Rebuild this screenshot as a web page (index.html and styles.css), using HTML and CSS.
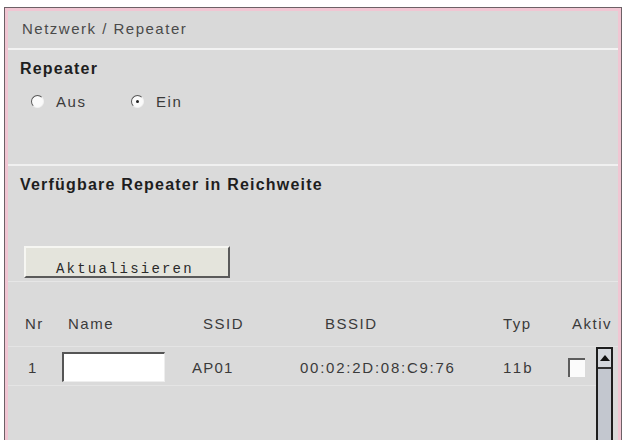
FILE: index.html
```html
<!DOCTYPE html>
<html lang="de">
<head>
<meta charset="utf-8">
<title>Netzwerk / Repeater</title>
<link rel="stylesheet" href="styles.css">
</head>
<body>
<div class="panel">
  <div class="frame">
    <div class="titlebar">Netzwerk / Repeater</div>
    <div class="section s1">
      <div class="heading">Repeater</div>
      <div class="radios">
        <label class="radio"><span class="dot"></span><span class="rl">Aus</span></label>
        <label class="radio on"><span class="dot"></span><span class="rl">Ein</span></label>
      </div>
    </div>
    <div class="section s2">
      <div class="heading">Verfügbare Repeater in Reichweite</div>
      <div class="btnwrap"><span class="button">Aktualisieren</span></div>
    </div>
    <div class="table">
      <div class="thead">
        <span class="c c1">Nr</span>
        <span class="c c2">Name</span>
        <span class="c c3">SSID</span>
        <span class="c c4">BSSID</span>
        <span class="c c5">Typ</span>
        <span class="c c6">Aktiv</span>
      </div>
      <div class="tbody">
        <div class="rows">
          <div class="row">
            <span class="c d1">1</span>
            <span class="c d2"><span class="input"></span></span>
            <span class="c d3">AP01</span>
            <span class="c d4">00:02:2D:08:C9:76</span>
            <span class="c d5">11b</span>
            <span class="c d6"><span class="check"></span></span>
          </div>
        </div>
        <div class="scrollbar">
          <div class="sb-up"><span class="tri"></span></div>
          <div class="sb-track"></div>
        </div>
      </div>
    </div>
  </div>
</div>
</body>
</html>
```

FILE: styles.css
```css
html, body {
  margin: 0;
  padding: 0;
  background: #ffffff;
  overflow: hidden;
}
body {
  font-family: "Liberation Sans", Arial, sans-serif;
  color: #333333;
}
.panel {
  margin: 7px 0 0 4px;
  width: 616px;
  height: 460px;
  border: 1px solid #6d6066;
  border-bottom: none;
}
.frame {
  height: 100%;
  border: 3px solid #f1c6d3;
  border-bottom: none;
  background: #dadada;
}
.titlebar {
  height: 37px;
  line-height: 35px;
  padding-left: 14px;
  font-size: 15px;
  letter-spacing: 1.5px;
  color: #4a4a4a;
  background: #d9d9d9;
  border-bottom: 2px solid #f3f3f3;
}
.section {
  border-bottom: 2px solid #f0f0f0;
}
.s1 {
  height: 114px;
}
.s2 {
  height: 115px;
  border-bottom: 1px solid #e6e6e6;
}
.heading {
  padding: 9px 0 0 12px;
  height: 20px;
  line-height: 20px;
  font-size: 16px;
  font-weight: bold;
  letter-spacing: 1.2px;
  color: #1e1e1e;
}
.radios {
  display: flex;
  padding: 13px 0 0 23px;
}
.radio {
  display: flex;
  align-items: center;
  height: 18px;
  width: 100px;
  font-size: 15px;
  letter-spacing: 1.6px;
  color: #3a3a3a;
}
.dot {
  width: 11px;
  height: 11px;
  border-radius: 50%;
  border: 1.5px solid;
  border-color: #555 #f2f2f2 #f2f2f2 #555;
  background: #fafafa;
  margin-right: 12px;
  position: relative;
  box-sizing: content-box;
}
.radio.on .dot::after {
  content: "";
  position: absolute;
  left: 4px;
  top: 4px;
  width: 3px;
  height: 3px;
  border-radius: 50%;
  background: #222;
}
.btnwrap {
  padding: 51px 0 0 16px;
}
.button {
  display: block;
  width: 206px;
  height: 32px;
  box-sizing: border-box;
  padding: 14px 0 0 30px;
  background: #e4e4dc;
  border-top: 2px solid #f6f6f2;
  border-left: 2px solid #f6f6f2;
  border-right: 2px solid #5a5a5a;
  border-bottom: 2px solid #5a5a5a;
  font-family: "Liberation Mono", "Courier New", monospace;
  font-size: 14px;
  line-height: 14px;
  letter-spacing: 2.2px;
  color: #2a2a2a;
}
.thead {
  display: flex;
  height: 65px;
  box-sizing: border-box;
  padding-top: 34px;
  line-height: 16px;
  font-size: 15px;
  letter-spacing: 1.5px;
  color: #3a3a3a;
  border-bottom: 1px solid #e4e4e4;
}
.c {
  display: block;
  flex: none;
  box-sizing: border-box;
}
.c1 { width: 47px; padding-left: 17px; }
.c2 { width: 125px; padding-left: 13px; }
.c3 { width: 110px; padding-left: 23px; }
.c4 { width: 200px; padding-left: 35px; }
.c5 { width: 70px; padding-left: 13px; }
.c6 { width: 50px; padding-left: 12px; }
.tbody {
  display: flex;
  height: 120px;
}
.rows {
  width: 588px;
}
.row {
  display: flex;
  align-items: center;
  height: 39px;
  padding-top: 2px;
  box-sizing: border-box;
  border-bottom: 1px solid #e4e4e4;
  font-size: 15px;
  letter-spacing: 1.2px;
  color: #3a3a3a;
}
.d1 { width: 47px; padding-left: 20px; }
.d2 { width: 125px; padding-left: 7px; }
.d3 { width: 110px; padding-left: 12px; }
.d4 { width: 200px; padding-left: 10px; letter-spacing: 1.75px; }
.d5 { width: 70px; padding-left: 13px; letter-spacing: 2.4px; }
.d6 { width: 36px; padding-left: 8px; }
.input {
  display: block;
  width: 103px;
  height: 30px;
  box-sizing: border-box;
  background: #ffffff;
  border-top: 2px solid #555;
  border-left: 2px solid #555;
  border-right: 1px solid #eee;
  border-bottom: 1px solid #eee;
}
.check {
  display: block;
  width: 17px;
  height: 19px;
  box-sizing: border-box;
  background: #fbfbfb;
  border-top: 2px solid #5c5c5c;
  border-left: 2px solid #5c5c5c;
}
.scrollbar {
  width: 13px;
  height: 100%;
  border-left: 2px solid #1e1e1e;
  border-right: 2px solid #1e1e1e;
  box-sizing: content-box;
  background: #c3c7cf;
}
.sb-up {
  height: 18px;
  border-top: 2px solid #1e1e1e;
  border-bottom: 2px solid #333;
  background: #d4d7dc;
  display: flex;
  justify-content: center;
  align-items: center;
}
.tri {
  width: 0;
  height: 0;
  border-left: 5px solid transparent;
  border-right: 5px solid transparent;
  border-bottom: 6px solid #111;
}
.sb-track {
  height: 100px;
}
```
